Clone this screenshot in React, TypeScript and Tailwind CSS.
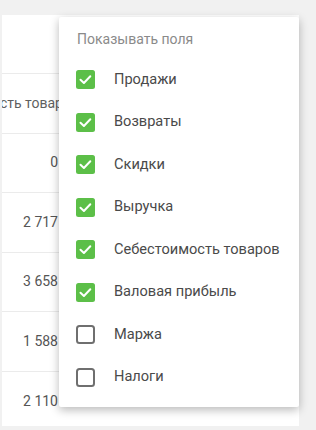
import React from "react";

const items: { label: string; checked: boolean }[] = [
  { label: "Продажи", checked: true },
  { label: "Возвраты", checked: true },
  { label: "Скидки", checked: true },
  { label: "Выручка", checked: true },
  { label: "Себестоимость товаров", checked: true },
  { label: "Валовая прибыль", checked: true },
  { label: "Маржа", checked: false },
  { label: "Налоги", checked: false },
];

const values = ["0", "2 717", "3 658", "1 588", "2 110"];

function Box({ checked }: { checked: boolean }) {
  if (checked) {
    return (
      <svg width="19" height="19" viewBox="0 0 19 19" className="shrink-0">
        <rect x="0" y="0" width="19" height="19" rx="2.5" fill="#5cbf48" />
        <path d="M4.5 9.8 L7.9 13 L14.3 6.3" fill="none" stroke="#fff" strokeWidth="2" strokeLinecap="round" strokeLinejoin="round" />
      </svg>
    );
  }
  return (
    <svg width="19" height="19" viewBox="0 0 19 19" className="shrink-0">
      <rect x="1" y="1" width="17" height="17" rx="2.5" fill="#fff" stroke="#6f6f6f" strokeWidth="2" />
    </svg>
  );
}

export default function App() {
  return (
    <div
      className="relative w-[316px] h-[430px] bg-[#f1f1f1] overflow-hidden"
      style={{ fontFamily: "Roboto, 'Noto Sans', sans-serif" }}
    >
      <div className="pt-[15px] pl-[2px]">
        <div className="w-[297px] h-[411px] bg-white overflow-hidden flex flex-col">
          <div className="h-[59px] shrink-0 border-b border-[#ebebeb]" />
          <div className="h-[59.5px] shrink-0 border-b border-[#ebebeb] flex items-center overflow-hidden">
            <span className="-ml-[82px] whitespace-nowrap text-[14px] text-[#5f5f5f]">
              Себестоимость товаров
            </span>
          </div>
          {values.map((v, i) => (
            <div
              key={i}
              className={`h-[59.5px] shrink-0 flex items-center ${i < values.length - 1 ? "border-b border-[#ebebeb]" : ""}`}
            >
              <div className="w-[56px] text-right text-[14px] text-[#555]">{v}</div>
            </div>
          ))}
        </div>
      </div>

      <div className="absolute left-[59px] top-[17px] w-[240px] h-[390px] bg-white rounded-[2px] shadow-[0_3px_10px_rgba(0,0,0,0.28)] pt-[12px] pb-[9px]">
        <div className="h-[20px] leading-[20px] pl-[18px] text-[14px] text-[#8a8a8a]">
          Показывать поля
        </div>
        <div className="mt-[9.75px] flex flex-col">
          {items.map((it) => (
            <div key={it.label} className="h-[42.45px] flex items-center pl-[17px]">
              <Box checked={it.checked} />
              <span className="ml-[19px] text-[14.6px] text-[#4a4a4a] whitespace-nowrap">{it.label}</span>
            </div>
          ))}
        </div>
      </div>
    </div>
  );
}
